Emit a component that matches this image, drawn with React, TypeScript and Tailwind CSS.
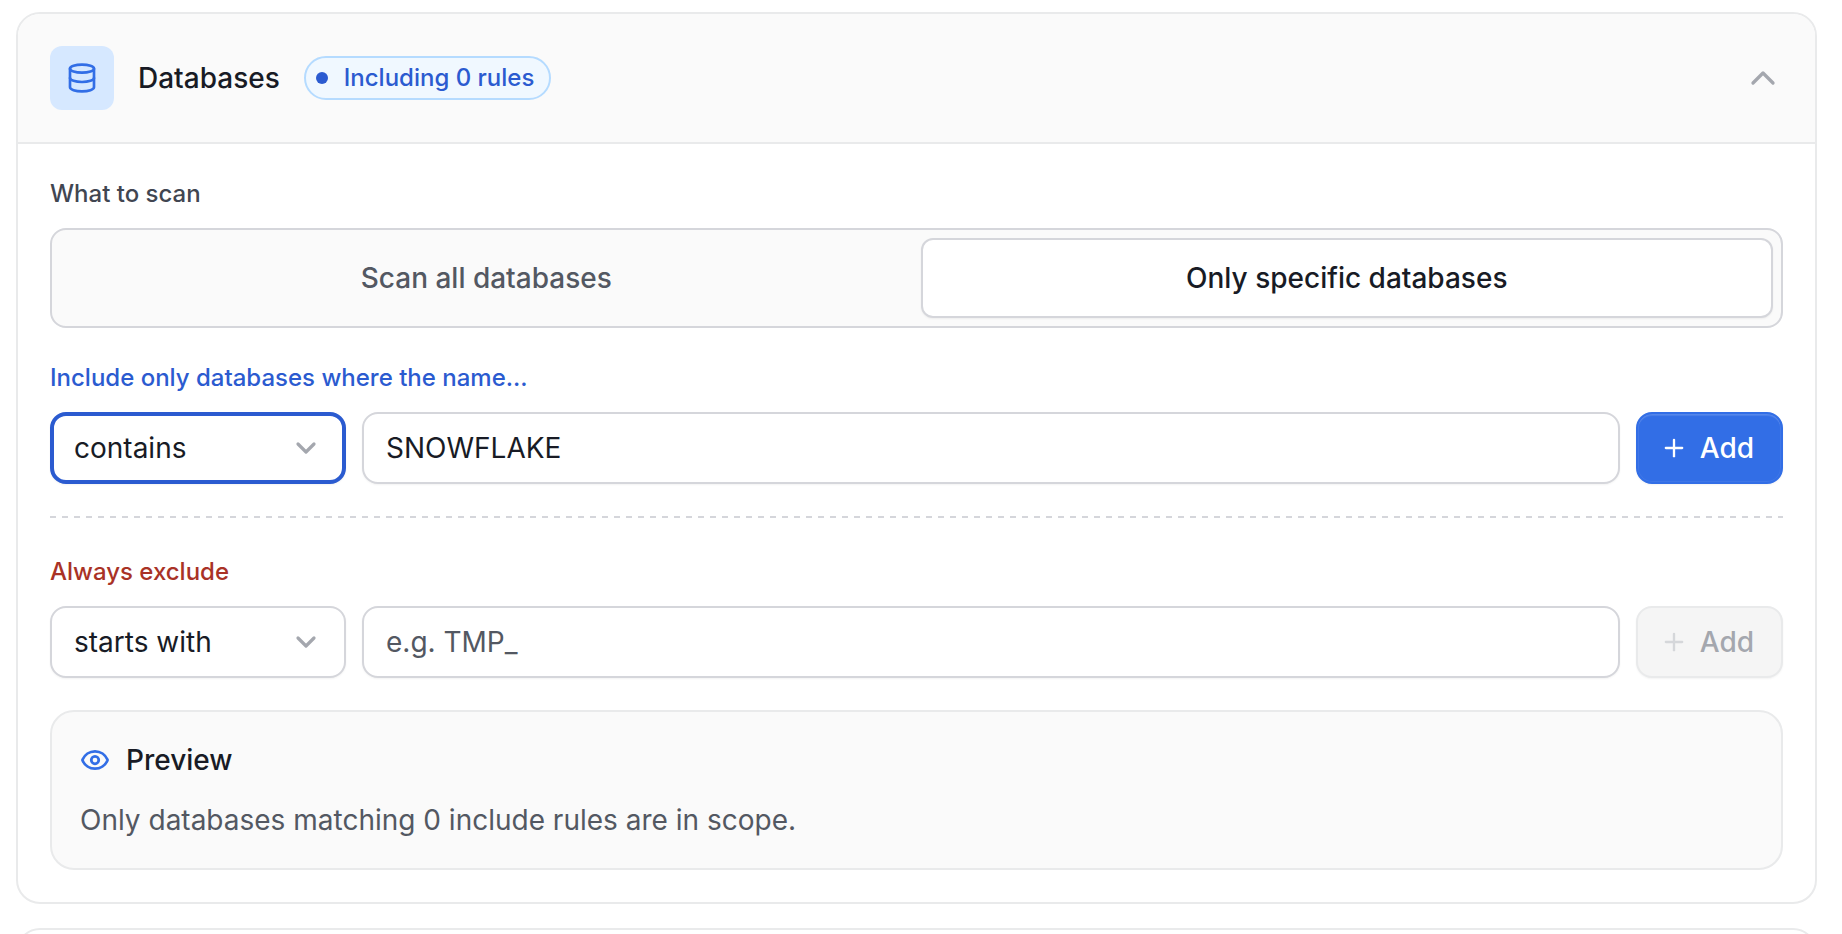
import { ChevronDown, ChevronUp, Database, Eye, Plus } from 'lucide-react';
import { clsx } from 'clsx';
import { useState } from 'react';

const operators = ['contains', 'starts with', 'ends with', 'equals'];

type RuleRowProps = {
  id: string;
  label: string;
  tone: string;
  operator: string;
  initialValue?: string;
  placeholder: string;
  focused?: boolean;
};

const RuleRow = ({ id, label, tone, operator, initialValue = '', placeholder, focused }: RuleRowProps) => {
  const [value, setValue] = useState(initialValue);
  const disabled = value === '';

  return (
    <div>
      <label htmlFor={id} className={clsx('block text-2xl leading-9 font-medium', tone)}>
        {label}
      </label>
      <div className="mt-4 flex gap-4">
        <div className="relative w-[296px] shrink-0">
          <select
            aria-label="Match operator"
            defaultValue={operator}
            className={clsx(
              'h-[72px] w-full appearance-none rounded-2xl bg-white pr-16 text-[28px] leading-10 text-[#181b25] shadow-xs outline-none',
              focused ? 'border-4 border-[#2b5bd0] pl-5' : 'border-2 border-[#d5d6db] pl-[22px]',
            )}
          >
            {operators.map((item) => (
              <option key={item}>{item}</option>
            ))}
          </select>
          <ChevronDown
            className="pointer-events-none absolute top-5 right-6 size-8 text-[#a4a7ae]"
            strokeWidth={2.4}
            aria-hidden="true"
          />
        </div>
        <input
          id={id}
          type="text"
          value={value}
          onChange={(e) => setValue(e.target.value)}
          placeholder={placeholder}
          className="h-[72px] min-w-0 flex-1 rounded-2xl border-2 border-[#d5d6db] bg-white px-[22px] text-[28px] leading-10 text-[#181b25] shadow-xs outline-none placeholder:text-[#535862]"
        />
        <button
          type="button"
          disabled={disabled}
          className={clsx(
            'flex h-[72px] shrink-0 items-center gap-3 rounded-2xl border-2 pr-[27px] pl-[22px] text-[28px] leading-10 font-medium shadow-xs',
            disabled
              ? 'border-[#e9eaeb] bg-[#f5f5f5] text-[#a4a7ae]'
              : 'border-[#326ee6] bg-[#326ee6] text-white inset-shadow-[0_2px_1px_rgb(255_255_255/0.12)] inset-ring inset-ring-white/6',
          )}
        >
          <Plus className={clsx('size-7', disabled && 'text-[#d5d7da]')} aria-hidden="true" />
          Add
        </button>
      </div>
    </div>
  );
};

const scopes = ['Scan all databases', 'Only specific databases'];

const App = () => {
  const [scope, setScope] = useState(scopes[1]);

  return (
    <main className="h-screen overflow-hidden bg-white pt-3 pr-[25px] pl-4 font-['Inter',sans-serif]">
      <section className="overflow-hidden rounded-3xl border-2 border-[#e9eaeb]">
        <header className="flex items-center gap-6 border-b-2 border-[#e9eaeb] bg-[#fafafa] p-8">
          <div className="flex size-16 items-center justify-center rounded-xl bg-[#d6e8ff]">
            <Database className="size-8 text-[#326ee6]" aria-hidden="true" />
          </div>
          <h2 className="text-[28px] leading-10 font-medium text-[#181b25]">Databases</h2>
          <span className="flex h-11 items-center gap-4 rounded-full border-2 border-[#b5dbff] bg-[#f0f8ff] pr-[15px] pl-[10px] text-2xl font-medium text-[#2b5bd0]">
            <span className="size-3 rounded-full bg-[#2b5bd0]" />
            Including 0 rules
          </span>
          <button type="button" aria-label="Collapse databases" className="ml-auto text-[#a4a7ae]">
            <ChevronUp className="size-10" aria-hidden="true" />
          </button>
        </header>

        <div className="p-8">
          <h3 id="scope-label" className="text-2xl leading-9 font-medium text-[#414651]">
            What to scan
          </h3>
          <div
            role="group"
            aria-labelledby="scope-label"
            className="mt-4 grid grid-cols-2 gap-2 rounded-2xl border-2 border-[#d5d6db] bg-[#fafafa] p-2"
          >
            {scopes.map((item) => (
              <button
                key={item}
                type="button"
                aria-pressed={scope === item}
                onClick={() => setScope(item)}
                className={clsx(
                  'h-20 rounded-xl border-2 text-[28px] leading-10 font-medium',
                  scope === item
                    ? 'border-[#d5d6db] bg-white text-[#181b25] shadow-xs'
                    : 'border-transparent text-[#535862]',
                )}
              >
                {item}
              </button>
            ))}
          </div>

          <div className="mt-8">
            <RuleRow
              id="include-value"
              label="Include only databases where the name..."
              tone="text-[#2b5bd0]"
              operator="contains"
              initialValue="SNOWFLAKE"
              placeholder="e.g. PROD_"
              focused
            />
          </div>

          <hr className="mt-8 mb-9 h-[2px] border-0 bg-[repeating-linear-gradient(90deg,#d5d6db_0_6px,transparent_6px_12px)]" />

          <RuleRow
            id="exclude-value"
            label="Always exclude"
            tone="text-[#a93226]"
            operator="starts with"
            placeholder="e.g. TMP_"
          />

          <div className="mt-8 rounded-3xl border-2 border-[#e9eaeb] bg-[#fafafa] p-7">
            <div className="flex items-center gap-4">
              <Eye className="size-[30px] text-[#326ee6]" strokeWidth={2.2} aria-hidden="true" />
              <h3 className="text-[28px] leading-10 font-medium text-[#181b25]">Preview</h3>
            </div>
            <p className="mt-5 text-[28px] leading-10 text-[#535862]">
              Only databases matching 0 include rules are in scope.
            </p>
          </div>
        </div>
      </section>

      <section className="mt-6 h-40 rounded-3xl border-2 border-[#e9eaeb]" />
    </main>
  );
};

export default App;
